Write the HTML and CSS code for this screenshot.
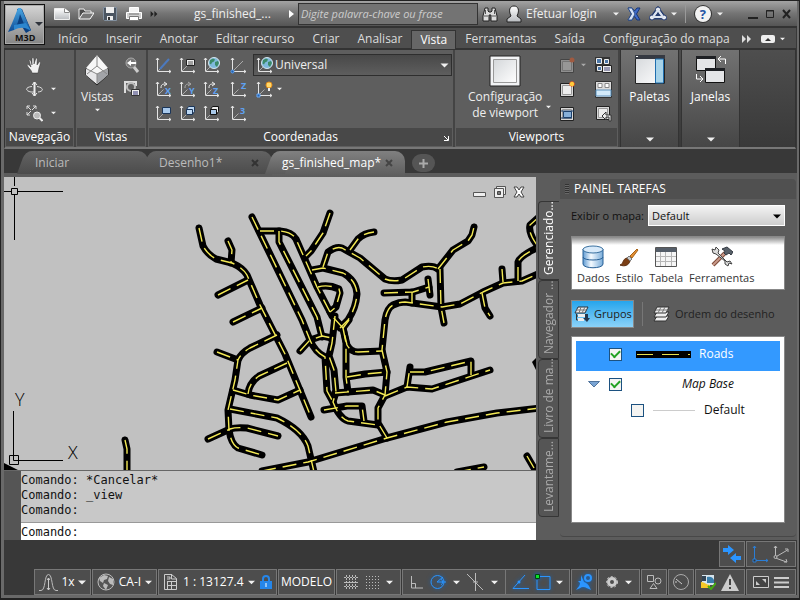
FILE: index.html
```html
<!DOCTYPE html>
<html lang="pt-BR">
<head>
<meta charset="utf-8">
<title>gs_finished_map</title>
<link rel="stylesheet" href="styles.css">
</head>
<body>
<svg class="defs" aria-hidden="true">
  <defs>
    <symbol id="axes" viewBox="0 0 17 17"><path d="M2.500 1v13.500M2.500 14.500H16M1 3l1.500-2L4 3M14 13l2 1.500-2 1.500" fill="none" stroke="#e4e4e4" stroke-width="1"/><path d="M2.500 14.500l6-6" stroke="#aaa"/></symbol>
    <symbol id="globe" viewBox="0 0 12 12"><circle cx="6" cy="6" r="5.500" fill="#7fb9dc" stroke="#d4e6ee"/><path d="M2 3l3-1.500 2 1-1 2-2 1-1 2-1.500-1zM7 5l3-1 1 2-2 4-2-2z" fill="#3c8a68"/></symbol>
    <symbol id="caret" viewBox="0 0 8 5"><path d="M0 .5h8l-4 4z" fill="currentColor"/></symbol>
    <symbol id="more" viewBox="0 0 9 8"><path d="M0 0l4 4-4 4zM5 0l4 4-4 4z" fill="currentColor"/></symbol>
    <symbol id="vp" viewBox="0 0 16 16"><path d="M1.500 1.500h13v13h-13z" fill="#d8d8d8" stroke="#222"/><path d="M3.500 3.500h9v9h-9z" fill="#ededed" stroke="#999"/></symbol>
    <linearGradient id="blue" x2="0" y2="1"><stop stop-color="#4aa8e4"/><stop offset="1" stop-color="#0d4a94"/></linearGradient>
    <linearGradient id="silver" x2="0" y2="1"><stop stop-color="#fff"/><stop offset="1" stop-color="#b9bcc0"/></linearGradient>
    <linearGradient id="pane" x2="1" y2="1"><stop stop-color="#d4d7da"/><stop offset="1" stop-color="#fff"/></linearGradient>
    <linearGradient id="cyl"><stop stop-color="#5f9ad2"/><stop offset=".4" stop-color="#f4faff"/><stop offset="1" stop-color="#79acd9"/></linearGradient>
  </defs>
</svg>
<div class="window">
  <header class="titlebar">
    <button class="app" aria-label="Menu do aplicativo">
      <svg width="38" height="39" viewBox="0 0 38 39"><path d="M12 4h5l9 21-5 3-5-8H9l3-3z" fill="#0b3f80"/><path d="M13 3c-3 8-6 16-10 24l6-2c3-5 5-10 6-16l6 15 5 2c-3-8-7-16-10-23z" fill="url(#blue)"/><path d="M9 20l12-2 5 8c-5-4-11-4-17-1z" fill="#2c86cf"/><path d="M30 17h8l-4 4z" fill="#30343c"/><text x="10" y="36" class="apptext">M3D</text></svg>
    </button>
    <div class="quick">
      <button aria-label="Novo"><svg width="16" height="16"><path d="M.500 2.500h10l5 4v7H.500z" fill="url(#silver)" stroke="#eee"/><path d="M10.500 2.500v4h5" fill="#fff" stroke="#888"/></svg></button>
      <button aria-label="Abrir"><svg width="16" height="16"><path d="M1 13V3h5l1 2h6v2" fill="#4c4c4c" stroke="#eee"/><path d="M1 13l4-6h11l-4 6z" fill="#777" stroke="#fff"/></svg></button>
      <button aria-label="Salvar"><svg width="16" height="16"><path d="M1.500 1.500h13v13h-12l-1-1z" fill="#4b5561" stroke="#8391a0"/><path d="M4 1h8v6H4zM5 10h6v4H5z" fill="#eee"/><path d="M6 11h2v3H6z" fill="#333"/></svg></button>
      <button aria-label="Imprimir"><svg width="16" height="16"><path d="M3.500 1.500h9v5h-9z" fill="#f4f4f4" stroke="#fff"/><path d="M.500 6.500h15v6H.500z" fill="#cfcfcf" stroke="#fff"/><path d="M3.500 10.500h9v4h-9z" fill="#fff" stroke="#777"/><path d="M3 8h10" stroke="#777"/></svg></button>
      <button class="dark" aria-label="Mais"><svg width="8" height="6"><use href="#more"/></svg></button>
    </div>
    <span class="doc">gs_finished_...</span>
    <svg class="play" width="5" height="8"><path d="M0 0l5 4-5 4z" fill="#fff"/></svg>
    <input class="search" type="search" aria-label="Pesquisa" placeholder="Digite palavra-chave ou frase">
    <div class="account">
      <button aria-label="Pesquisar"><svg width="16" height="18"><path d="M3 3h3v3l1 1h2l1-1V3h3l2 8v5H9v-6H7v6H1v-5z" fill="#ddd" stroke="#222"/><path d="M2 11h4M10 11h4M3.500 5v4M12.500 5v4" stroke="#555"/></svg></button>
      <button class="login"><svg width="16" height="18"><path d="M5 11C2 5 4 1 8 1s6 4 3 10l4 3v3H1v-3z" fill="url(#silver)" stroke="#222"/></svg>Efetuar login</button>
      <svg class="c" width="6" height="4"><use href="#caret"/></svg>
    </div>
    <div class="services">
      <button aria-label="Exchange"><svg width="14" height="14"><path d="M1 1h4l2.500 3L10 1h3L9.500 7 13 13h-3L7.500 9.500 5 13H1l3.500-6z" fill="#3d69c8" stroke="#173676"/><path d="M1 1h4l3 6-3 6H1l3.500-6z" fill="#d5e2f5" stroke="#31528d"/></svg></button>
      <button aria-label="A360"><svg width="18" height="15"><path d="M9 4L4 11h10z" fill="none" stroke="#263d70" stroke-width="5"/><path d="M9 4L4 11h10z" fill="none" stroke="#dce3ef" stroke-width="2"/><g fill="#edf0f5" stroke="#263d70"><circle cx="9" cy="3.500" r="2.500"/><circle cx="3" cy="11.500" r="2.500"/><circle cx="15" cy="11.500" r="2.500"/></g><path d="M9 4L4 11h10z" fill="none" stroke="#dce3ef" stroke-width="2"/></svg><svg class="c" width="6" height="4"><use href="#caret"/></svg></button>
      <button class="help" aria-label="Ajuda"><span>?</span><svg class="c" width="6" height="4"><use href="#caret"/></svg></button>
    </div>
    <div class="winbtns">
      <button aria-label="Minimizar"><svg width="10" height="10"><path d="M0 9h10" stroke="#222" stroke-width="2"/></svg></button>
      <button aria-label="Maximizar"><svg width="8" height="10"><path d="M.5 1.500h7v7h-7zM0 2h8" fill="none" stroke="#222"/></svg></button>
      <button aria-label="Fechar"><svg width="9" height="10"><path d="M1 1l7 8M8 1L1 9" stroke="#222" stroke-width="2"/></svg></button>
    </div>
  </header>
  <nav class="menu">
    <button>Início</button><button>Inserir</button><button>Anotar</button><button>Editar recurso</button><button>Criar</button><button>Analisar</button><button class="on">Vista</button><button>Ferramentas</button><button>Saída</button><button>Configuração do mapa</button>
    <button class="tail" aria-label="Mais guias"><svg width="9" height="8"><use href="#more"/></svg></button>
    <button class="tail" aria-label="Minimizar faixa"><svg width="14" height="8"><rect width="14" height="8" rx="2" fill="#eee"/><path d="M4 6l3-3 3 3z" fill="#333"/></svg><svg class="c" width="5" height="4"><use href="#caret"/></svg></button>
  </nav>
  <main class="ribbon">
    <section class="panel nav">
      <div class="body navgrid">
        <button aria-label="Pan"><svg width="17" height="17"><path d="M6 16c0-3-4-5-5-8 1-1 2 0 4 2L3 3c1-1 2 0 3 5V1c2-1 2 0 2 6l2-6c2 0 1 2 1 7l3-4c1 1 0 4-1 7l-1 5z" fill="#f1f1f1" stroke="#333" stroke-width=".5"/></svg></button>
        <button aria-label="Órbita"><svg width="17" height="17"><path d="M6 5.500C-1 6-1 10 5 11h3M11 5.500c7 1 7 5 1 5.500" fill="none" stroke="#ddd"/><path d="M8.500 1v14" stroke="#eee" stroke-width="2"/><path d="M6 4l2.500-3L11 4M6 12l2.500 3 2.500-3" fill="none" stroke="#eee"/></svg></button>
        <button aria-label="Zoom"><svg width="17" height="17"><path d="M1 4V1h3M1 1l4 4M7 1h3v3M10 1L6 5M1 7v3h3M1 10l4-4" fill="none" stroke="#ddd"/><circle cx="11" cy="10.500" r="3.500" fill="#bbb" stroke="#eee"/><path d="M13.500 13l3 3" stroke="#eee" stroke-width="2"/></svg></button>
        <svg class="c orb" width="5" height="4"><use href="#caret"/></svg><svg class="c zm" width="5" height="4"><use href="#caret"/></svg>
      </div>
      <h2>Navegação</h2>
    </section>
    <section class="panel views">
      <div class="body viewgrid">
        <button class="big"><svg width="26" height="32"><path d="M13 1l11 14v6L13 31 2 21v-6z" fill="#ddd" stroke="#222"/><path d="M13 1L2 14l11 6 11-6z" fill="#f7f7f7"/><path d="M13 20l11-5v6L13 30z" fill="#a2a4a8"/><path d="M2 15l11 5v10L2 21z" fill="#e8e8ea"/><path d="M13 2v10L3 20M13 12l10 8M3 15l10 5v10M13 20l10-5" fill="none" stroke="#888"/></svg><span>Vistas</span><svg class="c" width="5" height="4"><use href="#caret"/></svg></button>
        <div class="pair">
          <button aria-label="Vista anterior"><svg width="16" height="16"><circle cx="7" cy="6" r="5" fill="#777" stroke="#aaa"/><path d="M10 10l4 5" stroke="#ccc" stroke-width="3"/><path d="M3 6l4-3v2h5v2H7v2z" fill="#fff"/></svg></button>
          <button aria-label="Gerenciar vistas"><svg width="17" height="16"><path d="M1 12V1h11v4" fill="none" stroke="#ddd" stroke-width="2"/><circle cx="7" cy="6" r="4" fill="none" stroke="#bbb" stroke-width="2"/><path d="M7.500 8.500h8v6h-8z" fill="#eee" stroke="#333"/><path d="M9 11h5M9 13h5" stroke="#337"/></svg></button>
        </div>
      </div>
      <h2>Vistas</h2>
    </section>
    <section class="panel coord">
      <div class="body coordgrid">
        <button aria-label="SCU"><svg width="17" height="17"><use href="#axes"/><path d="M5 12l9-10" stroke="#4c79bd" stroke-width="2"/></svg></button>
        <button aria-label="SCU nomeado"><svg width="17" height="17"><use href="#axes"/><path d="M7.500 2.500h8v6h-8z" fill="#eee" stroke="#222"/><path d="M9 5h5M9 7h5" stroke="#555"/></svg></button>
        <button aria-label="Universal"><svg width="17" height="17"><use href="#axes"/><use href="#globe" x="5" width="12" height="12"/></svg></button>
        <button aria-label="Origem"><svg width="17" height="17"><use href="#axes"/><path d="M5 12l8-8" stroke="#aaa"/><circle cx="2.500" cy="14.500" r="1.500" fill="#225fae" stroke="#5aa0f0"/></svg></button>
        <label class="combo"><svg width="17" height="17"><use href="#axes"/><use href="#globe" x="5" width="12" height="12"/></svg><select aria-label="Sistema de coordenadas"><option>Universal</option></select><svg class="c" width="9" height="5"><use href="#caret"/></svg></label>
        <button aria-label="Girar X"><svg width="17" height="17"><use href="#axes"/><path d="M6 7c0-4 2-4 5-4M9 1l3 2-3 2" fill="none" stroke="#eee"/><text x="10" y="13">X</text></svg></button>
        <button aria-label="Girar Y"><svg width="17" height="17"><use href="#axes"/><path d="M6 7c0-4 2-4 5-4M9 1l3 2-3 2" fill="none" stroke="#aaa"/><text x="10" y="13">Y</text></svg></button>
        <button aria-label="Girar Z"><svg width="17" height="17"><use href="#axes"/><path d="M6 7c0-4 2-4 5-4M9 1l3 2-3 2" fill="none" stroke="#eee"/><text x="10" y="13">Z</text></svg></button>
        <button aria-label="Vetor Z"><svg width="17" height="17"><use href="#axes"/><text x="11" y="8">Z</text></svg></button>
        <button class="origin" aria-label="Ícone SCU"><svg width="17" height="17"><use href="#axes"/><path d="M1 13h3v3H1z" fill="#235fae" stroke="#6baaf4"/><circle cx="13" cy="4" r="3" fill="#ffd86b" stroke="#e8901c"/><path d="M12 7h2v3h-2z" fill="#eee"/></svg><svg class="c" width="5" height="4"><use href="#caret"/></svg></button>
        <button aria-label="Vista"><svg width="17" height="17"><use href="#axes"/><path d="M7.500 2.500h8v6h-8z" fill="#a8c9ec" stroke="#1b3558"/></svg></button>
        <button aria-label="Objeto"><svg width="17" height="17"><use href="#axes"/><path d="M7.500 4.500l2-3h6v5l-2 3h-6zM7.500 4.500h6v5" fill="#bcd7f2" stroke="#1b3558"/></svg></button>
        <button aria-label="Face"><svg width="17" height="17"><use href="#axes"/><path d="M7.500 4.500l2-3h6v5l-2 3h-6z" fill="#eee" stroke="#111"/><path d="M7.500 4.500h6v5h-6z" fill="#a9c9e9" stroke="#111"/></svg></button>
        <button aria-label="3 pontos"><svg width="17" height="17"><use href="#axes"/><text x="10" y="9">3</text></svg></button>
      </div>
      <h2>Coordenadas<svg width="5" height="5"><path d="M0 0l4 4M4.500 0v4.500H0" fill="none" stroke="#fff"/></svg></h2>
    </section>
    <section class="panel ports">
      <div class="body portgrid">
        <button class="big"><svg width="32" height="32"><path d="M1 1h30v30H1z" fill="#f2f3f5" stroke="#222"/><path d="M4.500 4.500h23v23h-23z" fill="url(#pane)" stroke="#999"/></svg><span>Configuração<br>de viewport</span></button>
        <svg class="c cfg" width="5" height="4"><use href="#caret"/></svg>
        <div class="icons">
          <button aria-label="Recortar"><svg width="17" height="17"><g opacity=".4"><use href="#vp" y="1" width="16" height="16"/></g><circle cx="13" cy="3" r="2.500" fill="#a05a40"/></svg><svg class="c dim" width="5" height="4"><use href="#caret"/></svg></button>
          <button aria-label="Nomeado"><svg width="17" height="17"><path d="M0 0h15v15H0z" fill="#333"/><path d="M1.500 1.500h5v5h-5zM9.500 2.500h4v4h-4zM2.500 9.500h4v4h-4z" fill="#4c77a8" stroke="#eee"/><path d="M7.500 8.500h9v7h-9z" fill="#eee" stroke="#222"/><path d="M9 11h6M9 13h6" stroke="#447"/></svg></button>
          <button aria-label="Nova viewport"><svg width="17" height="17"><use href="#vp" y="1" width="16" height="16"/><circle cx="13" cy="3" r="2.500" fill="#ffce3d" stroke="#e33518" stroke-dasharray="1 1"/></svg></button>
          <button aria-label="Unir"><svg width="17" height="17"><path d="M.500 .500h16v16H.500z" fill="#ddd" stroke="#333"/><path d="M3 2.500h4v4H3zM10 2.500h4v4h-4z" fill="#fff" stroke="#888"/><path d="M1 9h15v6H1z" fill="#d3eafa" stroke="#5c91bc"/></svg></button>
          <button aria-label="Ajustar"><svg width="17" height="17"><use href="#vp" y="1" width="16" height="16"/><path d="M4.500 6.500h8v6h-8z" fill="#85afd9" stroke="#1d416d"/><path d="M2 6h13M2 13h11" stroke="#1d416d"/></svg></button>
          <button aria-label="Restaurar"><svg width="17" height="17"><use href="#vp" width="16" height="16"/><path d="M7 11l4-4v3h5v6h-2v-4h-3v3z" fill="#eee" stroke="#333"/></svg></button>
        </div>
      </div>
      <h2>Viewports</h2>
    </section>
    <button class="tall"><svg width="30" height="30"><path d="M.5 .5h29v28H.5z" fill="url(#pane)" stroke="#222"/><path d="M0 0h30v4H0z" fill="#353942"/><path d="M20.500 4h8v24h-8z" fill="#a7d3e9" stroke="#1f6eae"/><path d="M1 1h2v1H1z" fill="#fff"/></svg><span>Paletas</span><svg class="c" width="8" height="5"><use href="#caret"/></svg></button>
    <button class="tall"><svg width="30" height="30"><path d="M.5 1.500h19v14H.5zM9.500 13.500h19v14h-19z" fill="#e4e5e7" stroke="#111"/><path d="M0 1h20v3H0zM9 13h20v3H9z" fill="#1e2024"/><path d="M29.500 9V4h-7M25 1l-3 3 3 3M.5 19v5h6M4 21l3 3-3 3" fill="none" stroke="#fff"/></svg><span>Janelas</span><svg class="c" width="8" height="5"><use href="#caret"/></svg></button>
  </main>
  <nav class="files">
    <button class="ft">Iniciar</button>
    <button class="ft">Desenho1*<svg width="8" height="8"><path d="M1 1l6 6M7 1L1 7" stroke="#333" stroke-width="2"/></svg></button>
    <button class="ft on">gs_finished_map*<svg width="8" height="8"><path d="M1 1l6 6M7 1L1 7" stroke="#444" stroke-width="2"/></svg></button>
    <button class="plus" aria-label="Nova guia"><svg width="9" height="9"><path d="M4.500 0v9M0 4.500h9" stroke="#aaa" stroke-width="2"/></svg></button>
  </nav>
  <div class="work">
    <div class="left">
      <div class="canvas">
        <svg class="map" viewBox="4 177 532 293" preserveAspectRatio="xMidYMid slice">
          <defs><g id="roads">
            <path d="M199 228L203 246Q207 254 216 259L232 263Q243 268 247 275L260 305L285 354L311 417"/>
            <path d="M228 241L232 250L231 263"/><path d="M218 295L248 280"/><path d="M233 322L262 308"/>
            <path d="M252 217L302 320L310 340Q315 352 325 357L327 391L333 402"/>
            <path d="M260 231L280 231Q292 232 296 239L317 287L332 316L343 328L347 345Q351 352 358 352L382 351"/>
            <path d="M279 231L279 242L317 317L322 337"/><path d="M330 213L323 233L311 251L306 256"/>
            <path d="M312 270L323 268L343 273Q356 280 357 294Q356 308 348 320L340 328"/>
            <path d="M323 267L328 252Q336 246 342 248L360 258L385 279Q392 282 402 280L422 267Q433 265 438 269"/>
            <path d="M350 250L358 239Q364 233 374 232"/><path d="M438 269L453 250L468 241L472 235L474 227"/>
            <path d="M440 269L441 307L444 323"/><path d="M384 293L413 292L429 287"/><path d="M428 279L430 295"/><path d="M412 292L412 303"/>
            <path d="M387 438L378 423L378 408L385 395L387 372L382 350L385 320Q387 308 393 305Q399 302 405 302L442 307L460 304L483 292L503 283L522 281L540 273"/>
            <path d="M502 269L503 282"/><path d="M482 293L485 308L490 316"/><path d="M518 281L518 262Q520 256 537 248"/><path d="M540 216L530 225Q528 233 537 245"/>
            <path d="M318 287Q328 284 339 289L340 293L336 307L330 312"/>
            <path d="M277 335L250 348Q241 353 238 360L235 380L228 410L229 430Q231 444 238 448L262 455"/>
            <path d="M217 352L238 360"/><path d="M287 363L259 376Q249 383 248 394"/><path d="M233 390L250 395L278 400L300 390"/>
            <path d="M230 409L277 418Q302 430 308 446L314 472"/><path d="M208 439L230 429Q236 427 247 428L278 436"/>
            <path d="M262 471L308 462L387 438L447 422L497 413L540 408"/>
            <path d="M300 351L310 340L322 336L332 338"/><path d="M335 316L332 343L329 356L334 370L336 392L333 402Q339 418 348 421L378 425"/>
            <path d="M343 328L346 343L346 377L348 392"/><path d="M347 377L365 374L387 372"/><path d="M335 393L373 390L385 395"/>
            <path d="M324 410L347 406L362 406L364 421"/><path d="M385 396L407 387L432 389L490 370"/>
            <path d="M407 387L410 367"/><path d="M410 372L425 372L471 361L471 375"/><path d="M343 328L349 320"/>
            <path d="M527 456L534 468"/><path d="M457 472L484 467"/><path d="M125 440L127 449L127 472"/>
          </g></defs>
          <use href="#roads" class="asphalt"/><use href="#roads" class="stripe"/>
          <path d="M532 362l4-4v12zM4 463l14 7H4z"/>
          <g class="cursor"><path d="M14.500 177v9M14.500 195v45M4 191.500h7M18 191.500h45M11.500 188.500h6v6h-6z"/>
          <path d="M13.500 411v49.500h49.500M9.500 455.500h9v9h-9z"/></g>
          <text x="15" y="406" class="ucs">Y</text><text x="68" y="459" class="ucs">X</text>
        </svg>
        <div class="mdi">
          <button aria-label="Minimizar desenho"><svg width="13" height="12"><path d="M.5 6.500h12v4H.5z" fill="#eee" stroke="#555"/></svg></button>
          <button aria-label="Restaurar desenho"><svg width="13" height="12"><path d="M3.500 .5h9v8h-9z" fill="#eee" stroke="#555"/><path d="M1.500 2.500h9v9h-9z" fill="#eee" stroke="#555"/><path d="M4.500 5.500h3v3h-3z" fill="#777" stroke="#444"/></svg></button>
          <button aria-label="Fechar desenho"><svg width="12" height="12"><path d="M1 1h3l2 3 2-3h3L8 6l3 5H8L6 8l-2 3H1l3-5z" fill="#fff" stroke="#444"/></svg></button>
        </div>
      </div>
      <div class="command">
        <div class="grip"></div>
        <div class="cmdbody">
          <div class="log">Comando: *Cancelar*<br>Comando: _view<br>Comando:</div>
          <div class="prompt"><label for="cmd">Comando:</label><input id="cmd" type="text"></div>
        </div>
      </div>
    </div>
    <aside class="dock">
      <div class="vtabs"><button class="on">Gerenciado...</button><button>Navegador ...</button><button>Livro de ma...</button><button>Levantame...</button></div>
      <div class="tasks">
        <h1><i></i>PAINEL TAREFAS</h1>
        <div class="inner">
          <div class="field"><label for="mp">Exibir o mapa:</label><div class="sel"><select id="mp"><option>Default</option></select><svg class="c" width="8" height="5"><use href="#caret"/></svg></div></div>
          <div class="tools">
            <button><svg width="22" height="24"><path d="M1 4v15c0 5 20 5 20 0V4z" fill="url(#cyl)" stroke="#286096"/><ellipse cx="11" cy="4.500" rx="10" ry="3.500" fill="#d8eafa" stroke="#386f9f"/><path d="M1 12c0 4 20 4 20 0" fill="none" stroke="#286096"/></svg>Dados</button>
            <button><svg width="22" height="24"><path d="M2 20c4-1 2-6 7-7l3 3c-1 4-5 6-10 4z" fill="#7b3f15" stroke="#5b2c0d"/><path d="M9 13l2-2 3 3-2 2z" fill="#ccc" stroke="#777"/><path d="M12 11l7-7 1 1-6 8z" fill="#e28e35" stroke="#a76316"/></svg>Estilo</button>
            <button><svg width="22" height="24"><path d="M.5 2.500h21v19H.5z" fill="#f6f6f6" stroke="#555"/><path d="M1 3h20v4H1z" fill="#555e69"/><path d="M1 11.500h20M1 16.500h20M5.500 7v14M10.500 7v14M16.500 7v14" stroke="#b6b6b6"/></svg>Tabela</button>
            <button><svg width="22" height="24"><path d="M2 20L14 8" stroke="#7d4a3a" stroke-width="4"/><path d="M2 20L14 8" stroke="#c99a8a" stroke-width="2"/><path d="M11 4l5-2 6 5-2 3-2-2-3 2-2-2 1-2z" fill="#586069" stroke="#343a42"/><path d="M1 4l3 1 1-3 3 3-1 3 9 9 3-1 2 3-3-1-1 3-3-2v-3L5 9 2 8z" fill="#ddd" stroke="#444"/></svg>Ferramentas</button>
          </div>
          <div class="modes">
            <button class="sel-mode"><svg width="17" height="18"><path d="M4 2h10l-3 6H1z" fill="#eee" stroke="#2a3540"/><path d="M7 2L5 8M11 2L8 8M2 5h10" stroke="#777"/><path d="M2.500 9v6h6M2 11h6" fill="none" stroke="#333"/><path d="M4 9h9v3H4zM4 13h6v3H4z" fill="#eee"/><path d="M11 9h3v4h2l-3 4-4-4h2z" fill="#26374c"/></svg>Grupos</button>
            <button class="order"><svg width="17" height="16"><g fill="#eee" stroke="#333"><path d="M4 10h12l-3 5H1z"/><path d="M4 6h12l-3 5H1z"/><path d="M4 1h12l-3 6H1z"/></g><path d="M8 1L5 7M12 1L9 7M3 4h12" stroke="#777"/></svg>Ordem do desenho</button>
          </div>
          <div class="layers">
            <div class="layer picked"><input type="checkbox" id="l1" checked><svg class="sample" width="55" height="7"><path d="M0 0h55v7H0z"/><path d="M1 3.500h16M26 3.500h17M52 3.500h2" stroke="#e9e04e"/></svg><label for="l1">Roads</label></div>
            <div class="layer base"><svg width="12" height="7"><path d="M.5 .5h11L6 6z" fill="#7ba5d4" stroke="#51749c"/></svg><input type="checkbox" id="l2" checked><label for="l2">Map Base</label></div>
            <div class="layer def"><input type="checkbox" id="l3"><svg width="42" height="7"><path d="M0 3.500h42" stroke="#ccc"/></svg><label for="l3">Default</label></div>
          </div>
        </div>
      </div>
    </aside>
  </div>
  <footer class="status">
    <div class="line">
      <div class="grp w26"><button aria-label="Recolher"><svg width="18" height="18"><path d="M0 3h5V0l6 5-6 5V7H0zM18 11h-5V8l-6 5 6 5v-3h5z" fill="#2b95ff"/></svg></button></div>
      <div class="grp w50"><button aria-label="SCU"><svg width="17" height="18"><path d="M2.500 1v15M1 3l1.500-2L4 3M2 15.500h14M14 14l2 1.500-2 1.500" fill="none" stroke="#2b7ed6"/><path d="M1 14h3v3H1z" fill="#333" stroke="#2b7ed6"/></svg></button><button aria-label="Isométrico"><svg width="17" height="18"><path d="M2.500 1v12l11 4M2.500 12l12-7M1 3l1.500-2L4 3M12 4h3v3M11 17h3l-1-3" fill="none" stroke="#bbb"/><circle cx="2.500" cy="12" r="1.500" fill="#555" stroke="#bbb"/></svg></button></div>
    </div>
    <div class="line">
      <div class="grp w57"><svg width="19" height="18"><path d="M0 17.500h2c5 0 3-16 7.500-16s2.500 16 7.500 16h2" fill="none" stroke="#bbb"/><path d="M9.500 5v12M8 7l1.500-2L11 7M8 15l1.500 2 1.500-2" fill="none" stroke="#ccc"/></svg><button>1x</button><svg class="c" width="8" height="5"><use href="#caret"/></svg></div>
      <div class="grp w65"><svg width="18" height="18"><circle cx="9" cy="9" r="8" fill="#555" stroke="#bbb"/><path d="M2 5l5-3 4 1-1 3-3 1-1 3-3-2zM7 10l4 2-2 5-3-4zM12 4l4 2v6l-3-1-2-3z" fill="#bbb"/></svg><button>CA-I</button><svg class="c" width="7" height="5"><use href="#caret"/></svg></div>
      <div class="grp w119"><svg width="15" height="18"><path d="M1.500 16.500V1.500h7l5 4v11zM8.500 1v5h5M4 4h3v2H4M4 8.500h9M4 12.500h9M4.500 8v8M8.500 8v8" fill="none" stroke="#ccc"/></svg><button>1 : 13127.4</button><svg class="c" width="7" height="5"><use href="#caret"/></svg><svg width="12" height="14"><path d="M3 7V4c0-4 6-4 6 0v3" fill="none" stroke="#2586ea" stroke-width="2"/><path d="M0 6h12v8H0z" fill="#2586ea"/><path d="M6 8v4" stroke="#fff"/></svg></div>
      <div class="grp w57"><button>MODELO</button></div>
      <div class="grp w65"><svg width="14" height="14"><path d="M2.500 0v14M5.500 0v14M8.500 0v14M11.500 0v14M0 2.500h14M0 7.500h14M0 11.500h14" stroke="#bbb" stroke-dasharray="2 1"/></svg><svg width="13" height="14"><path d="M0 1.500h13M0 4.500h13M0 7.500h13M0 10.500h13M0 13.500h13" stroke="#bbb" stroke-dasharray="1 2"/></svg><svg class="c" width="7" height="5"><use href="#caret"/></svg></div>
      <div class="grp w104"><svg width="13" height="14"><path d="M1.500 1v12H13M1.500 8.500h4V13" fill="none" stroke="#bbb"/></svg><svg class="glow" width="17" height="16"><circle cx="7.500" cy="8" r="6.500" fill="none" stroke="#2b95ff"/><path d="M16 8H7l6-5M11 5c2 1 2 5 0 6" fill="none" stroke="#2b95ff"/></svg><svg class="c" width="7" height="5"><use href="#caret"/></svg><svg width="17" height="18"><path d="M0 1l16 16M8.500 0v18M6 9h5" stroke="#bbb"/></svg><svg class="c" width="7" height="5"><use href="#caret"/></svg></div>
      <div class="grp w65 joined"><svg class="glow" width="17" height="16"><path d="M13 1L1 14.500h16" fill="none" stroke="#2b95ff"/><circle cx="7" cy="8" r="1.500" fill="#2b95ff"/></svg><svg class="glow" width="16" height="16"><path d="M3 2.500h12v13H2V6" fill="none" stroke="#2b95ff"/><path d="M.5 .5h4v4h-4z" fill="#0be329" stroke="#041"/></svg><svg class="c" width="7" height="5"><use href="#caret"/></svg></div>
      <div class="grp w26"><svg class="glow" width="18" height="17"><path d="M6 1l3 7c3 1 5 3 7 8-3-1-5-3-8-3-2 0-4 2-7 3 2-3 4-4 4-7L3 7h3z" fill="#2b95ff"/><circle cx="13" cy="4" r="3" fill="none" stroke="#2b95ff" stroke-width="2"/></svg></div>
      <div class="grp w42"><svg width="12" height="12"><circle cx="6" cy="6" r="3.500" fill="none" stroke="#ccc" stroke-width="3"/><circle cx="6" cy="6" r="5.500" fill="none" stroke="#ccc" stroke-dasharray="2 2"/></svg><svg class="c" width="7" height="5"><use href="#caret"/></svg></div>
      <div class="grp w26"><svg width="16" height="16"><path d="M1.500 1.500h6v6h-6zM7.500 9.500l3.500 5H4z" fill="none" stroke="#bbb"/><circle cx="12" cy="7" r="3" fill="none" stroke="#bbb"/></svg></div>
      <div class="grp w26"><svg width="18" height="18"><circle cx="9" cy="9" r="7.500" fill="none" stroke="#aaa"/><path d="M3 9h2M4 6l6 5" stroke="#ccc"/></svg></div>
      <div class="grp w50"><svg width="15" height="16"><path d="M1 1h12v10H1z" fill="#d7e4ec"/><path d="M1 2h4v5H1z" fill="#345"/><path d="M6 3c3-1 6 0 7 3v3H6z" fill="#397eab"/><path d="M0 8c4 0 5 3 9 3v3H0z" fill="#f6c827"/><path d="M7 12l3 3 5-6" fill="none" stroke="#4a1" stroke-width="2"/></svg><svg width="18" height="17"><path d="M9 0l9 17H0z" fill="#ccc"/><path d="M9 5v6M9 13v2" stroke="#444" stroke-width="2"/></svg></div>
      <div class="grp w50"><svg width="16" height="12"><path d="M.5 .5h15v11H.5z" fill="#444" stroke="#ccc"/><path d="M9 3h4v4zM3 9V5l4 4z" fill="#ccc"/></svg><svg width="15" height="13"><path d="M0 2h15M0 6.500h15M0 11h15" stroke="#ccc" stroke-width="2"/></svg></div>
    </div>
  </footer>
</div>
</body>
</html>
```
FILE: styles.css
```css
* { box-sizing: border-box; }
body {
  margin: 0;
  font: 12px/16px "Open Sans", "Noto Sans", sans-serif;
  color: #eee;
}
button, input, select { font: inherit; color: inherit; }
button { background: none; border: 0; padding: 0; margin: 0; text-align: center; white-space: nowrap; }
h1, h2 { margin: 0; font-size: 12px; font-weight: 400; }
svg { display: block; flex: none; }
.defs { position: absolute; width: 0; height: 0; }
.c { color: #f0f0f0; }
.c.dim { color: #aaa; }

.window {
  height: 100vh;
  display: flex;
  flex-direction: column;
  background: #383838;
  border: 1px solid #222;
  border-bottom-width: 2px;
  box-shadow: inset 3px 0 #696969, inset -2px 0 #696969, inset 0 -3px #696969;
  padding: 0 2px 3px 3px;
}

/* title bar */
.titlebar {
  position: relative;
  flex: none;
  height: 27px;
  display: flex;
  align-items: center;
  background: linear-gradient(#a3a3a3, #747474 50%, #555);
  border-bottom: 2px solid #333;
  padding: 0 6px 0 50px;
}
.app {
  position: absolute;
  left: 0;
  top: 3px;
  width: 41px;
  height: 41px;
  z-index: 2;
  background: linear-gradient(#d5d5d5, #858585);
  border: 1px solid #111;
  box-shadow: inset 0 0 0 1px #aaa;
}
.apptext { font: bold 9px "Open Sans", sans-serif; fill: #111; }
.quick { display: flex; gap: 8px; align-items: center; }
.dark { color: #222; }
.doc { margin-left: 36px; width: 95px; }
.play { margin-right: 4px; }
.search {
  flex: 0 1 180px;
  min-width: 0;
  height: 22px;
  border: 1px solid #333;
  background: #737373;
  padding: 0 2px;
  font-size: 11px;
  font-style: italic;
}
.search::placeholder { color: #ccc; opacity: 1; }
.account, .services, .winbtns, .services button, .login { display: flex; align-items: center; }
.account { margin-left: 4px; gap: 8px; }
.login { gap: 4px; }
.account .c { margin-left: 8px; }
.services { margin-left: 8px; gap: 8px; flex: none; }
.services button { gap: 4px; }
.help { border-left: 1px solid #999; height: 18px; }
.services .help { padding-left: 9px; gap: 6px; }
.help span {
  width: 16px; height: 16px; border-radius: 50%;
  background: #f2f2f2; color: #2455a4; font: bold 13px/16px "Open Sans", sans-serif;
  box-shadow: 0 0 0 1px #333;
}
.winbtns { margin-left: auto; gap: 8px; }

/* ribbon tabs */
.menu { flex: none; height: 21px; display: flex; background: #4e4e4e; padding-left: 45px; border-bottom: 1px solid #333; align-items: end; margin-right: 1px; }
.menu button { height: 18px; padding: 0 9px; color: #ddd; line-height: 16px; }
.menu button.on { background: #666; color: #fff; border: 1px solid #333; border-bottom: 0; padding: 0 8px; height: 19px; margin-bottom: -1px; }
.menu .tail { display: flex; align-items: center; gap: 5px; padding: 0 3px; }
.menu .tail + .tail { margin-left: 4px; }

/* ribbon */
.ribbon { flex: none; height: 100px; display: flex; background: linear-gradient(#4e4e4e, #393939); border: 1px solid #333; border-bottom: 2px solid #777; margin-right: 1px; }
.panel { display: flex; flex-direction: column; background: #5e5e5e; border-right: 2px solid #444; padding: 0 1px 1px; flex: none; }
.panel h2 { background: #484848; height: 18px; line-height: 18px; text-align: center; color: #fff; position: relative; }
.panel h2 svg { position: absolute; right: 3px; bottom: 5px; }
.body { flex: 1; }
.nav { width: 71px; }
.views { width: 72px; }
.coord { width: 307px; }
.ports { width: 165px; }
.navgrid { display: grid; grid-template: repeat(3, 24px) / 34px 1fr; padding: 3px 0 0 11px; align-items: center; justify-items: center; }
.navgrid button { grid-column: 1; }
.navgrid .orb { grid-area: 2 / 2; }
.navgrid .zm { grid-area: 3 / 2; }
.navgrid .c { justify-self: start; }
.viewgrid { display: flex; justify-content: space-between; padding: 4px 4px 0; }
.big { display: flex; flex-direction: column; align-items: center; color: #eee; }
.viewgrid .big { gap: 3px; }
.pair { display: grid; gap: 8px; align-content: start; padding-top: 3px; }
.coordgrid { display: grid; grid-template: repeat(3, 24px) / repeat(3, 24px) 30px 1fr; padding: 3px 0 0 2px; align-items: center; justify-items: center; }
.coordgrid text { font: bold 9px "Open Sans", sans-serif; fill: #5ea2f2; }
.coordgrid > :nth-child(n+11) { grid-row: 3; }
.combo { display: flex; align-items: center; gap: 2px; width: 100%; height: 22px; padding: 0 2px; background: linear-gradient(#484848, #5e5e5e); border: 1px solid #2e2e2e; }
.combo select { appearance: none; border: 0; background: none; flex: 1; padding: 0; }
.origin { justify-self: start; display: flex; align-items: center; gap: 4px; padding-left: 3px; }
.portgrid { display: flex; align-items: start; justify-content: space-between; padding: 5px 5px 0 12px; }
.portgrid .big { gap: 2px; }
.cfg { margin: 50px 4px 0 0; }
.icons { display: grid; grid-template: repeat(3, 24px) / 36px 17px; align-items: center; margin-top: -2px; }
.icons button { display: flex; align-items: center; gap: 5px; }
.tall { width: 59px; margin-right: 2px; display: flex; flex-direction: column; align-items: center; padding: 5px 0; gap: 4px; background: linear-gradient(#727272, #464646); border: 1px solid #333; border-width: 0 1px; color: #fff; }
.tall .c { margin-top: auto; }

/* file tabs */
.files { flex: none; height: 26px; margin-top: 2px; display: flex; align-items: start; background: linear-gradient(#383838 22px, #5c5c5c 22px); padding-left: 20px; }
.ft { position: relative; display: flex; align-items: center; justify-content: space-between; width: 124px; height: 23px; padding: 0 13px 0 11px; color: #bbb; background: linear-gradient(#626262, #4c4c4c); border-radius: 8px 10px 0 0; z-index: 0; }
.ft::before { content: ""; position: absolute; z-index: -1; left: -3px; top: 1px; width: 20px; height: 22px; background: inherit; transform: skewX(-20deg); border-radius: 6px 0 0 0; }
.ft.on { width: 133px; height: 26px; padding: 0 12px 2px 10px; color: #fff; background: linear-gradient(#808080, #5c5c5c); }
.plus { margin: 3px 0 0 7px; width: 23px; height: 18px; border-radius: 9px; background: #555; display: grid; place-items: center; }

/* work area */
.work { flex: 1; min-height: 0; display: flex; }
.left { flex: 1; min-width: 0; display: flex; flex-direction: column; }
.canvas { flex: 1; min-height: 0; position: relative; background: #c1c1c1; overflow: hidden; }
.map { width: 100%; height: 100%; }
.asphalt, .stripe { fill: none; stroke: #000; stroke-width: 7; stroke-linecap: round; stroke-linejoin: round; }
.stripe { stroke: #f4ea55; stroke-width: 1.4; stroke-dasharray: 14 7; stroke-linecap: butt; }
.cursor { fill: none; stroke: #000; }
.ucs { font: 300 18px "Open Sans", sans-serif; }
.mdi { position: absolute; top: 9px; right: 11px; display: flex; gap: 7px; }
.command { flex: none; display: flex; height: 70px; border-top: 1px solid #666; }
.grip { width: 17px; background: #555; }
.cmdbody { flex: 1; display: flex; flex-direction: column; color: #111; font: 12px/15px "DejaVu Sans Mono", "Liberation Mono", monospace; }
.log { flex: 1; background: #c8c8c8; padding-top: 2px; border-bottom: 1px solid #999; }
.prompt { display: flex; height: 17px; background: #fff; line-height: 19px; }
.prompt input { flex: 1; min-width: 0; border: 0; outline: 0; padding: 0 7px; background: none; }

/* dock */
.dock { flex: none; width: 261px; display: flex; background: #5c5c5c; padding: 2px 1px 3px 2px; }
.vtabs { display: flex; flex-direction: column; width: 21px; padding-top: 22px; flex: none; margin-right: 1px; }
.vtabs button { height: 79px; writing-mode: vertical-rl; transform: rotate(180deg); color: #aaa; background: #555; border: 1px solid #363636; border-radius: 0 4px 4px 0; text-align: left; padding: 4px 0; line-height: 18px; }
.vtabs .on { color: #fff; background: #5c5c5c; border-left: 0; }
.tasks { flex: 1; min-width: 0; display: flex; flex-direction: column; border-bottom: 1px solid #484848; border-radius: 4px; }
.tasks h1 { flex: none; height: 20px; line-height: 20px; background: #505050; border-radius: 4px 4px 0 0; display: flex; align-items: center; gap: 5px; color: #fff; padding-left: 5px; }
.tasks h1 i { width: 4px; height: 10px; background: repeating-linear-gradient(#333 0 1px, #666 1px 2px); }
.inner { flex: 1; min-height: 0; padding: 6px 11px 13px; display: flex; flex-direction: column; }
.field { display: flex; justify-content: space-between; align-items: center; color: #111; font-size: 11px; white-space: nowrap; }
.sel { position: relative; width: 137px; height: 21px; }
.sel select { appearance: none; width: 100%; height: 100%; border: 1px solid #fff; border-radius: 0; padding: 0 3px; background: linear-gradient(#f3f3f3, #cdcdcd); font-size: 11px; }
.sel .c { position: absolute; right: 4px; top: 9px; color: #000; }
.tools { margin-top: 10px; flex: none; height: 54px; display: flex; gap: 6px; padding: 8px 5px 0; background: linear-gradient(#888, #fff 8px); border: 1px solid #888; color: #333; font-size: 11px; }
.tools button { display: flex; flex-direction: column; align-items: center; gap: 1px; }
.modes { display: flex; flex: none; margin: 10px 0 8px; height: 28px; color: #222; font-size: 11px; }
.modes button { display: flex; align-items: center; gap: 5px; }
.modes .sel-mode { width: 63px; gap: 3px; padding-left: 2px; background: linear-gradient(#26a5ed, #8bd2f8); border: 1px solid #888; }
.order { margin: 2px 0 2px 8px; padding-left: 10px; border-left: 1px solid #777; }
.layers { flex: 1; background: #fff; border: 1px solid #888; color: #111; padding: 4px; }
.layer { display: flex; align-items: center; height: 26px; }
.picked { height: 30px; background: #3399ff; color: #fff; padding: 0 0 4px 33px; }
.picked .sample { margin: 0 8px 0 14px; }
.base { padding-left: 12px; gap: 9px; font-style: italic; }
.base label { margin-left: 51px; }
.def { padding-left: 55px; gap: 9px; }
.layers input { appearance: none; width: 13px; height: 13px; margin: 0; background: #f4f4f2; border: 1px solid #1c5180; display: grid; place-items: center; flex: none; }
.layers input:checked::before { content: ""; width: 7px; height: 4px; border: solid #21a121; border-width: 0 0 2px 2px; transform: translateY(-1px) rotate(-45deg); }

/* status bar */
.status { flex: none; display: flex; flex-direction: column; gap: 2px; padding-top: 1px; }
.line { display: flex; justify-content: flex-end; gap: 1px; padding-right: 1px; }
.grp { height: 26px; border: 1px solid #777; background: #4d4d4d; display: flex; align-items: center; justify-content: space-evenly; color: #fff; }
.w26 { width: 26px; }
.w42 { width: 42px; }
.w50 { width: 50px; }
.w57 { width: 57px; }
.w65 { width: 65px; }
.w104 { width: 104px; }
.w119 { width: 119px; }
.joined { margin-left: -2px; }
.glow { filter: drop-shadow(0 0 2px #0768d0); }
```
